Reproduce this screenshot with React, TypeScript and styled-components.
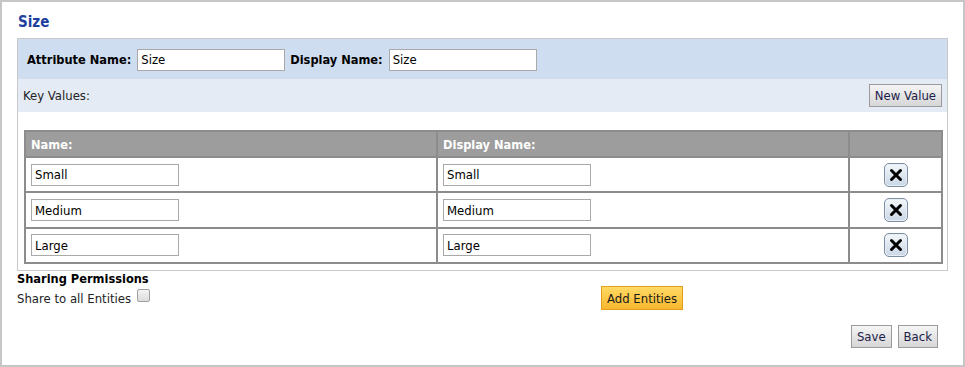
import styled, { createGlobalStyle } from 'styled-components';

const GlobalStyle = createGlobalStyle`
	body {
		margin: 0;
		background: #fff;
		font-family: "DejaVu Sans Condensed", "DejaVu Sans", sans-serif;
		font-size: 13px;
		color: #111;
	}
`;

type KeyValue = {
	name: string;
	display: string;
};

const keyValues: KeyValue[] = [
	{ name: 'Small', display: 'Small' },
	{ name: 'Medium', display: 'Medium' },
	{ name: 'Large', display: 'Large' },
];

export default function App() {
	return (
		<>
			<GlobalStyle />
			<Frame>
				<Title>Size</Title>
				<Panel>
					<HeaderRow>
						<Label>Attribute Name:</Label>
						<TextInput defaultValue="Size" />
						<Label>Display Name:</Label>
						<TextInput defaultValue="Size" />
					</HeaderRow>
					<KeyRow>
						<span>Key Values:</span>
						<GrayButton>New Value</GrayButton>
					</KeyRow>
					<TableWrap>
						<ValuesTable>
							<colgroup>
								<col style={{ width: 412 }} />
								<col style={{ width: 412 }} />
								<col />
							</colgroup>
							<thead>
								<tr>
									<HeadCell>Name:</HeadCell>
									<HeadCell>Display Name:</HeadCell>
									<HeadCell />
								</tr>
							</thead>
							<tbody>
								{keyValues.map((kv) => (
									<tr key={kv.name}>
										<Cell>
											<TextInput defaultValue={kv.name} />
										</Cell>
										<Cell>
											<TextInput defaultValue={kv.display} />
										</Cell>
										<Cell center>
											<RemoveButton aria-label="Remove">
												<svg width="14" height="14" viewBox="0 0 14 14">
													<path d="M2.5 2.5 L11.5 11.5 M11.5 2.5 L2.5 11.5" stroke="#000" strokeWidth="3" strokeLinecap="round" />
												</svg>
											</RemoveButton>
										</Cell>
									</tr>
								))}
							</tbody>
						</ValuesTable>
					</TableWrap>
				</Panel>
				<Sharing>
					<div>
						<SubTitle>Sharing Permissions</SubTitle>
						<ShareLine>
							Share to all Entities
							<CheckBox type="checkbox" />
						</ShareLine>
					</div>
					<OrangeButton>Add Entities</OrangeButton>
				</Sharing>
				<Actions>
					<GrayButton>Save</GrayButton>
					<GrayButton>Back</GrayButton>
				</Actions>
			</Frame>
		</>
	);
}

const Frame = styled.div`
	box-sizing: border-box;
	width: 965px;
	height: 367px;
	border: 2px solid #c6c6c6;
	padding: 0 15px;
`;

const Title = styled.h2`
	margin: 0;
	padding: 11px 0 7px 1px;
	font-size: 15px;
	line-height: 18px;
	font-weight: bold;
	color: #1e3f9e;
`;

const Panel = styled.div`
	width: 931px;
	box-sizing: border-box;
	border: 1px solid #c9c9c9;
`;

const HeaderRow = styled.div`
	display: flex;
	align-items: center;
	height: 40px;
	padding: 1px 0 0 9px;
	box-sizing: border-box;
	background: #cfddf0;
	gap: 6px;

	& > input {
		margin-right: -1px;
	}
`;

const Label = styled.span`
	font-weight: bold;
	font-size: 12.7px;
	color: #000;
`;

const KeyRow = styled.div`
	display: flex;
	align-items: center;
	justify-content: space-between;
	height: 33px;
	padding: 0 5px 0 5px;
	background: #e4ebf5;
	color: #222;
`;

const TableWrap = styled.div`
	padding: 18px 4px 6px 6px;
`;

const ValuesTable = styled.table`
	width: 919px;
	border-collapse: collapse;
	border: 2px solid #8c8c8c;
	table-layout: fixed;
`;

const HeadCell = styled.th`
	height: 24px;
	padding: 0 5px;
	background: #9d9d9d;
	color: #fff;
	font-weight: bold;
	font-size: 12.7px;
	text-align: left;
	border: 2px solid #8c8c8c;
`;

const Cell = styled.td<{ center?: boolean }>`
	height: 33.4px;
	padding: 0 5px;
	border: 2px solid #8c8c8c;
	text-align: ${(p) => (p.center ? 'center' : 'left')};
	vertical-align: middle;
`;

const TextInput = styled.input`
	box-sizing: border-box;
	width: 148px;
	height: 22px;
	padding: 1px 3px;
	border: 1px solid #a9a9a9;
	font-family: inherit;
	font-size: 13px;
	color: #000;
	outline: none;
`;

const RemoveButton = styled.button`
	display: inline-flex;
	align-items: center;
	justify-content: center;
	box-sizing: border-box;
	width: 24px;
	height: 24px;
	padding: 0;
	border: 1px solid #7f8fa3;
	border-radius: 5px;
	background: linear-gradient(#f3f7fb, #c9d6e5);
	box-shadow: inset 0 0 0 1px #e8eef6;
	vertical-align: middle;
`;

const GrayButton = styled.button`
	box-sizing: border-box;
	height: 23px;
	padding: 0 5px;
	border: 1px solid #9b9b9b;
	background: linear-gradient(#f5f5f5, #d6d6d6);
	font-family: inherit;
	font-size: 13px;
	color: #1c1c48;
`;

const Sharing = styled.div`
	display: grid;
	grid-template-columns: 584px auto;
	align-items: end;
	justify-items: start;
	padding-top: 0;
`;

const SubTitle = styled.div`
	font-weight: bold;
	font-size: 12.7px;
	line-height: 15px;
	color: #000;
`;

const ShareLine = styled.div`
	display: flex;
	align-items: center;
	gap: 6px;
	height: 24px;
	color: #222;
`;

const CheckBox = styled.input`
	appearance: none;
	width: 13px;
	height: 13px;
	margin: 0 0 6px 0;
	border: 1px solid #a0a0a0;
	border-radius: 2px;
	background: linear-gradient(#f4f4f4, #dcdcdc);
`;

const OrangeButton = styled.button`
	box-sizing: border-box;
	height: 24px;
	padding: 0 5px;
	border: 1px solid #e29e1c;
	background: linear-gradient(#ffd964, #f9b72d);
	font-family: inherit;
	font-size: 13px;
	color: #1a1a1a;
`;

const Actions = styled.div`
	display: flex;
	justify-content: flex-end;
	gap: 6px;
	width: 921px;
	margin-top: 15px;
`;
